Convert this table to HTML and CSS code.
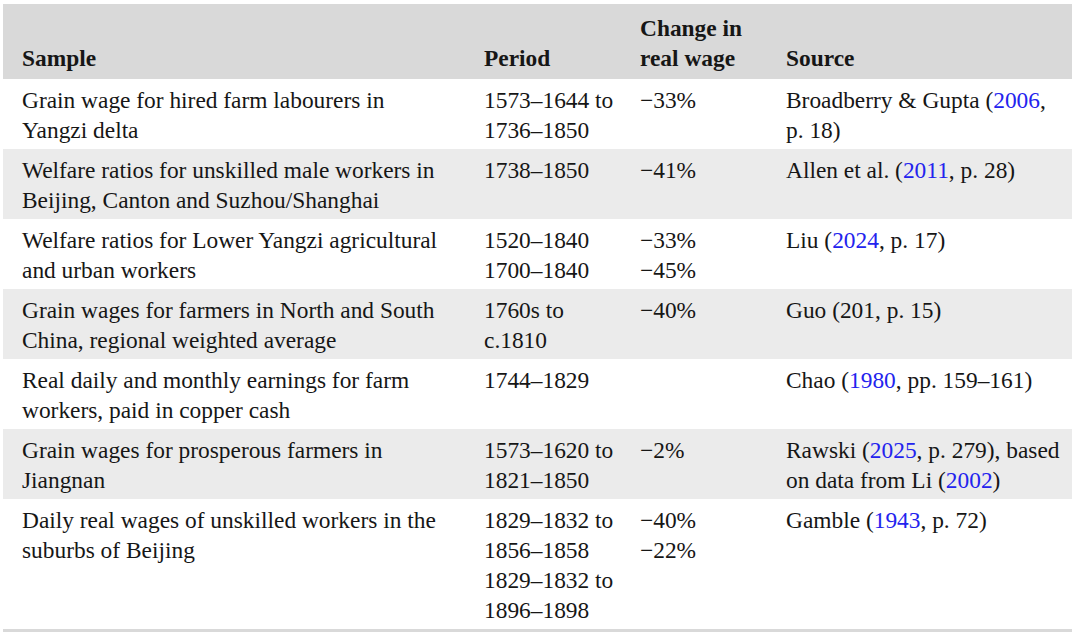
FILE: index.html
```html
<!DOCTYPE html>
<html lang="en">
<head>
<meta charset="utf-8">
<title>Real wage estimates</title>
<link rel="stylesheet" href="styles.css">
</head>
<body>
<div class="wrap">
<table class="wages">
  <colgroup>
    <col class="c-sample">
    <col class="c-period">
    <col class="c-change">
    <col class="c-source">
  </colgroup>
  <thead>
    <tr>
      <th>Sample</th>
      <th>Period</th>
      <th>Change in<br>real wage</th>
      <th>Source</th>
    </tr>
  </thead>
  <tbody>
    <tr>
      <td>Grain wage for hired farm labourers in Yangzi delta</td>
      <td>1573–1644 to<br>1736–1850</td>
      <td>−33%</td>
      <td>Broadberry &amp; Gupta (<a href="#">2006</a>, p.&nbsp;18)</td>
    </tr>
    <tr class="alt">
      <td>Welfare ratios for unskilled male workers in Beijing, Canton and Suzhou/Shanghai</td>
      <td>1738–1850</td>
      <td>−41%</td>
      <td>Allen et al. (<a href="#">2011</a>, p. 28)</td>
    </tr>
    <tr>
      <td>Welfare ratios for Lower Yangzi agricultural and urban workers</td>
      <td>1520–1840<br>1700–1840</td>
      <td>−33%<br>−45%</td>
      <td>Liu (<a href="#">2024</a>, p. 17)</td>
    </tr>
    <tr class="alt">
      <td>Grain wages for farmers in North and South China, regional weighted average</td>
      <td>1760s to<br>c.1810</td>
      <td>−40%</td>
      <td>Guo (201, p. 15)</td>
    </tr>
    <tr>
      <td>Real daily and monthly earnings for farm workers, paid in copper cash</td>
      <td>1744–1829</td>
      <td></td>
      <td>Chao (<a href="#">1980</a>, pp. 159–161)</td>
    </tr>
    <tr class="alt">
      <td>Grain wages for prosperous farmers in Jiangnan</td>
      <td>1573–1620 to<br>1821–1850</td>
      <td>−2%</td>
      <td>Rawski (<a href="#">2025</a>, p. 279), based on data from Li (<a href="#">2002</a>)</td>
    </tr>
    <tr>
      <td>Daily real wages of unskilled workers in the suburbs of Beijing</td>
      <td>1829–1832 to<br>1856–1858<br>1829–1832 to<br>1896–1898</td>
      <td>−40%<br>−22%</td>
      <td>Gamble (<a href="#">1943</a>, p. 72)</td>
    </tr>
  </tbody>
</table>
</div>
</body>
</html>
```
FILE: styles.css
```css
html, body {
  margin: 0;
  padding: 0;
  background: #ffffff;
}

.wrap {
  padding: 4px 8px 0 3px;
}

.wages {
  width: 1069px;
  border-collapse: collapse;
  table-layout: fixed;
  font-family: "Liberation Serif", "Times New Roman", serif;
  font-size: 23.4px;
  line-height: 30px;
  color: #161616;
  border-bottom: 3px solid #d9d9d9;
}

.c-sample { width: 462px; }
.c-period { width: 156px; }
.c-change { width: 146px; }
.c-source { width: 305px; }

.wages th {
  background: #d9d9d9;
  font-weight: bold;
  text-align: left;
  vertical-align: bottom;
  padding: 9px 4px 6px 19px;
  height: 60px;
}

.wages td {
  vertical-align: top;
  padding: 6px 8px 4px 19px;
}

.wages td:first-child {
  padding-right: 18px;
}

.wages tr.alt td {
  background: #ebebeb;
}

.wages td:nth-child(2),
.wages td:nth-child(3) {
  padding-right: 2px;
  white-space: nowrap;
}

.wages a {
  color: #2323ee;
  text-decoration: none;
}
```
